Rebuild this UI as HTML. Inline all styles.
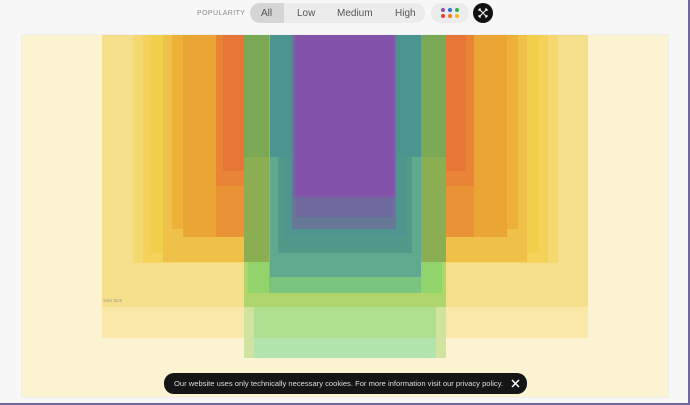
<!DOCTYPE html>
<html><head><meta charset="utf-8"><style>
*{margin:0;padding:0;box-sizing:border-box}
body{width:690px;height:405px;background:#f7f7f7;position:relative;overflow:hidden;font-family:"Liberation Sans",sans-serif;border-right:2px solid #6f66a0;border-bottom:2px solid #6f66a0}
.r{position:absolute}
.pop{position:absolute;left:197px;top:10px;font-size:7px;letter-spacing:.4px;color:#888}
.seg{position:absolute;left:250px;top:3px;width:175px;height:20px;background:#ececec;border-radius:10px;font-size:10px;color:#555}
.seg span{position:absolute;top:5px}
.all{position:absolute;left:0;top:0;width:34px;height:20px;background:#d5d5d5;border-radius:10px 0 0 10px}
.dots{position:absolute;left:431px;top:3px;width:38px;height:20px;background:#ececec;border-radius:10px}
.dots i{position:absolute;width:4px;height:4px;border-radius:50%}
.x{position:absolute;left:473px;top:3px;width:20px;height:20px;background:#111;border-radius:50%}
.cookie{position:absolute;left:164px;top:373px;width:363px;height:21px;background:#151515;border-radius:10px;color:#ddd;font-size:7.6px;line-height:21px;padding-left:10px;white-space:nowrap}
</style></head><body>
<div class="r" style="left:21px;top:34px;width:648px;height:364px;background:#fbf3d2;border:1px solid #eee"></div>
<div class="r" style="left:102px;top:35px;width:486px;height:272px;background:#f6df8a"></div>
<div class="r" style="left:102px;top:307px;width:486px;height:31px;background:#f9e8a8"></div>
<div class="r" style="left:133px;top:35px;width:425px;height:228px;background:#f6d96e"></div>
<div class="r" style="left:143px;top:35px;width:405px;height:227px;background:#f4d25a"></div>
<div class="r" style="left:151px;top:35px;width:388px;height:218px;background:#f2cf4a"></div>
<div class="r" style="left:163px;top:35px;width:364px;height:227px;background:#f0c148"></div>
<div class="r" style="left:172px;top:35px;width:346px;height:194px;background:#edb038"></div>
<div class="r" style="left:183px;top:35px;width:324px;height:202px;background:#eba535"></div>
<div class="r" style="left:216px;top:35px;width:258px;height:202px;background:#ea9236"></div>
<div class="r" style="left:216px;top:35px;width:258px;height:151px;background:#e98335"></div>
<div class="r" style="left:223px;top:35px;width:243px;height:136px;background:#e77535"></div>
<div class="r" style="left:244px;top:35px;width:202px;height:323px;background:#d0e4a0"></div>
<div class="r" style="left:254px;top:307px;width:182px;height:51px;background:#b2e4ae"></div>
<div class="r" style="left:254px;top:307px;width:182px;height:31px;background:#aedf90"></div>
<div class="r" style="left:244px;top:35px;width:202px;height:272px;background:#afd66b"></div>
<div class="r" style="left:248px;top:35px;width:194px;height:258px;background:#92d46c"></div>
<div class="r" style="left:244px;top:35px;width:202px;height:227px;background:#8cae52"></div>
<div class="r" style="left:244px;top:35px;width:202px;height:122px;background:#7aa855"></div>
<div class="r" style="left:269px;top:35px;width:152px;height:258px;background:#7bc47e"></div>
<div class="r" style="left:270px;top:35px;width:151px;height:242px;background:#5faa8f"></div>
<div class="r" style="left:278px;top:35px;width:134px;height:218px;background:#52998a"></div>
<div class="r" style="left:284px;top:35px;width:122px;height:202px;background:#4f9590"></div>
<div class="r" style="left:270px;top:35px;width:151px;height:122px;background:#4c9490"></div>
<div class="r" style="left:292px;top:35px;width:104px;height:194px;background:#667896"></div>
<div class="r" style="left:296px;top:35px;width:97px;height:182px;background:#6e6aa0"></div>
<div class="r" style="left:294px;top:35px;width:101px;height:163px;background:#7a5ea6"></div>
<div class="r" style="left:296px;top:35px;width:97px;height:161px;background:#8251a9"></div>
<div class="r" style="left:103px;top:298px;font-size:4.5px;color:#998">Your Size</div>

<div class="pop">POPULARITY</div>
<div class="seg"><div class="all"></div><span style="left:11px">All</span><span style="left:47px">Low</span><span style="left:87px">Medium</span><span style="left:145px">High</span></div>
<div class="dots">
<i style="left:10px;top:5px;background:#8a4fb0"></i><i style="left:17px;top:5px;background:#2f6fd0"></i><i style="left:24px;top:5px;background:#2fb050"></i>
<i style="left:10px;top:11px;background:#e8402a"></i><i style="left:17px;top:11px;background:#f07a20"></i><i style="left:24px;top:11px;background:#f5b820"></i></div>
<div class="x"><svg width="20" height="20" viewBox="0 0 20 20"><path d="M6 6l8 8M14 6l-8 8M6 6h2M6 6v2M14 6h-2M14 6v2M6 14h2M6 14v-2M14 14h-2M14 14v-2" stroke="#fff" stroke-width="1"/></svg></div>
<div class="cookie">Our website uses only technically necessary cookies. For more information visit our privacy policy.<svg style="position:absolute;left:347px;top:6px" width="9" height="9" viewBox="0 0 9 9"><path d="M1 1l7 7M8 1l-7 7" stroke="#fff" stroke-width="1.5"/></svg></div>
</body></html>
